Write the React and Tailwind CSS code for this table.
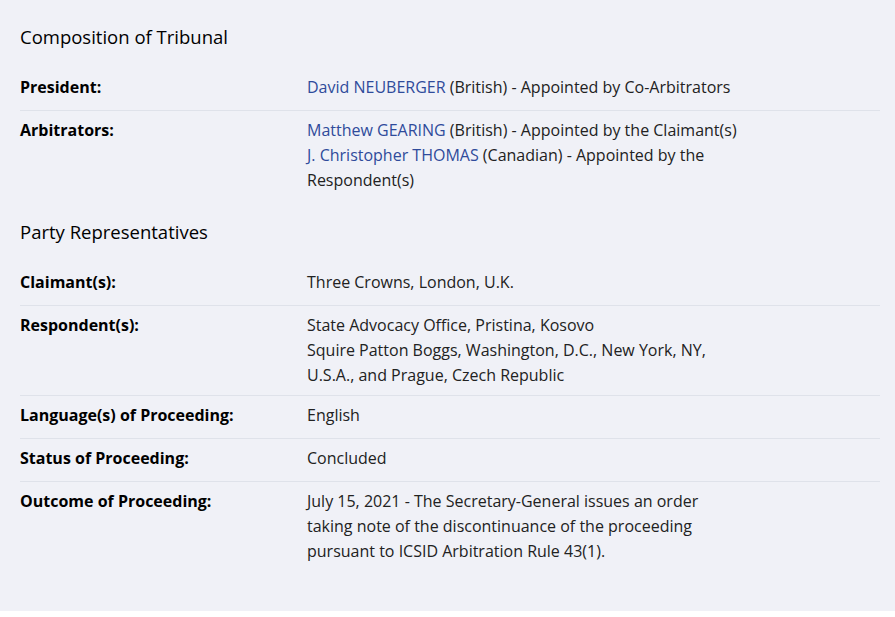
import React from "react";

const Link = ({ children }) => (
  <a href="#" className="text-[#2f4b9b] no-underline">
    {children}
  </a>
);

const Row = ({ label, children, last }) => (
  <div
    className={`flex items-start pt-[7px] ${
      last ? "pb-2" : "pb-[7px] border-b border-[#dfe2ea]"
    }`}
  >
    <div className="w-[287px] shrink-0 pb-[3px] text-[16px] leading-[25px] font-bold text-black">
      {label}
    </div>
    <div className="w-[434px] text-[16px] leading-[25px] text-[#222]">
      {children}
    </div>
  </div>
);

const Heading = ({ children }) => (
  <h2 className="pt-[17px] pb-[18px] text-[18.5px] leading-[27px] font-normal text-black">
    {children}
  </h2>
);

export default function App() {
  return (
    <div
      className="bg-white min-h-screen pb-[7px]"
      style={{ fontFamily: '"Open Sans", sans-serif' }}
    >
      <div className="bg-[#f0f1f7] pl-5 pr-[15px] pt-[6px] pb-[39px]">
        <Heading>Composition of Tribunal</Heading>
        <Row label="President:">
          <Link>David NEUBERGER</Link> (British) - Appointed by Co-Arbitrators
        </Row>
        <Row label="Arbitrators:" last>
          <p>
            <Link>Matthew GEARING</Link> (British) - Appointed by the Claimant(s)
          </p>
          <p>
            <Link>J. Christopher THOMAS</Link> (Canadian) - Appointed by the
            Respondent(s)
          </p>
        </Row>

        <Heading>Party Representatives</Heading>
        <Row label="Claimant(s):">Three Crowns, London, U.K.</Row>
        <Row label="Respondent(s):">
          <p>State Advocacy Office, Pristina, Kosovo</p>
          <p>
            Squire Patton Boggs, Washington, D.C., New York, NY, U.S.A., and
            Prague, Czech Republic
          </p>
        </Row>
        <Row label="Language(s) of Proceeding:">English</Row>
        <Row label="Status of Proceeding:">Concluded</Row>
        <Row label="Outcome of Proceeding:" last>
          July 15, 2021 - The Secretary-General issues an order taking note of
          the discontinuance of the proceeding pursuant to ICSID Arbitration
          Rule 43(1).
        </Row>
      </div>
    </div>
  );
}
